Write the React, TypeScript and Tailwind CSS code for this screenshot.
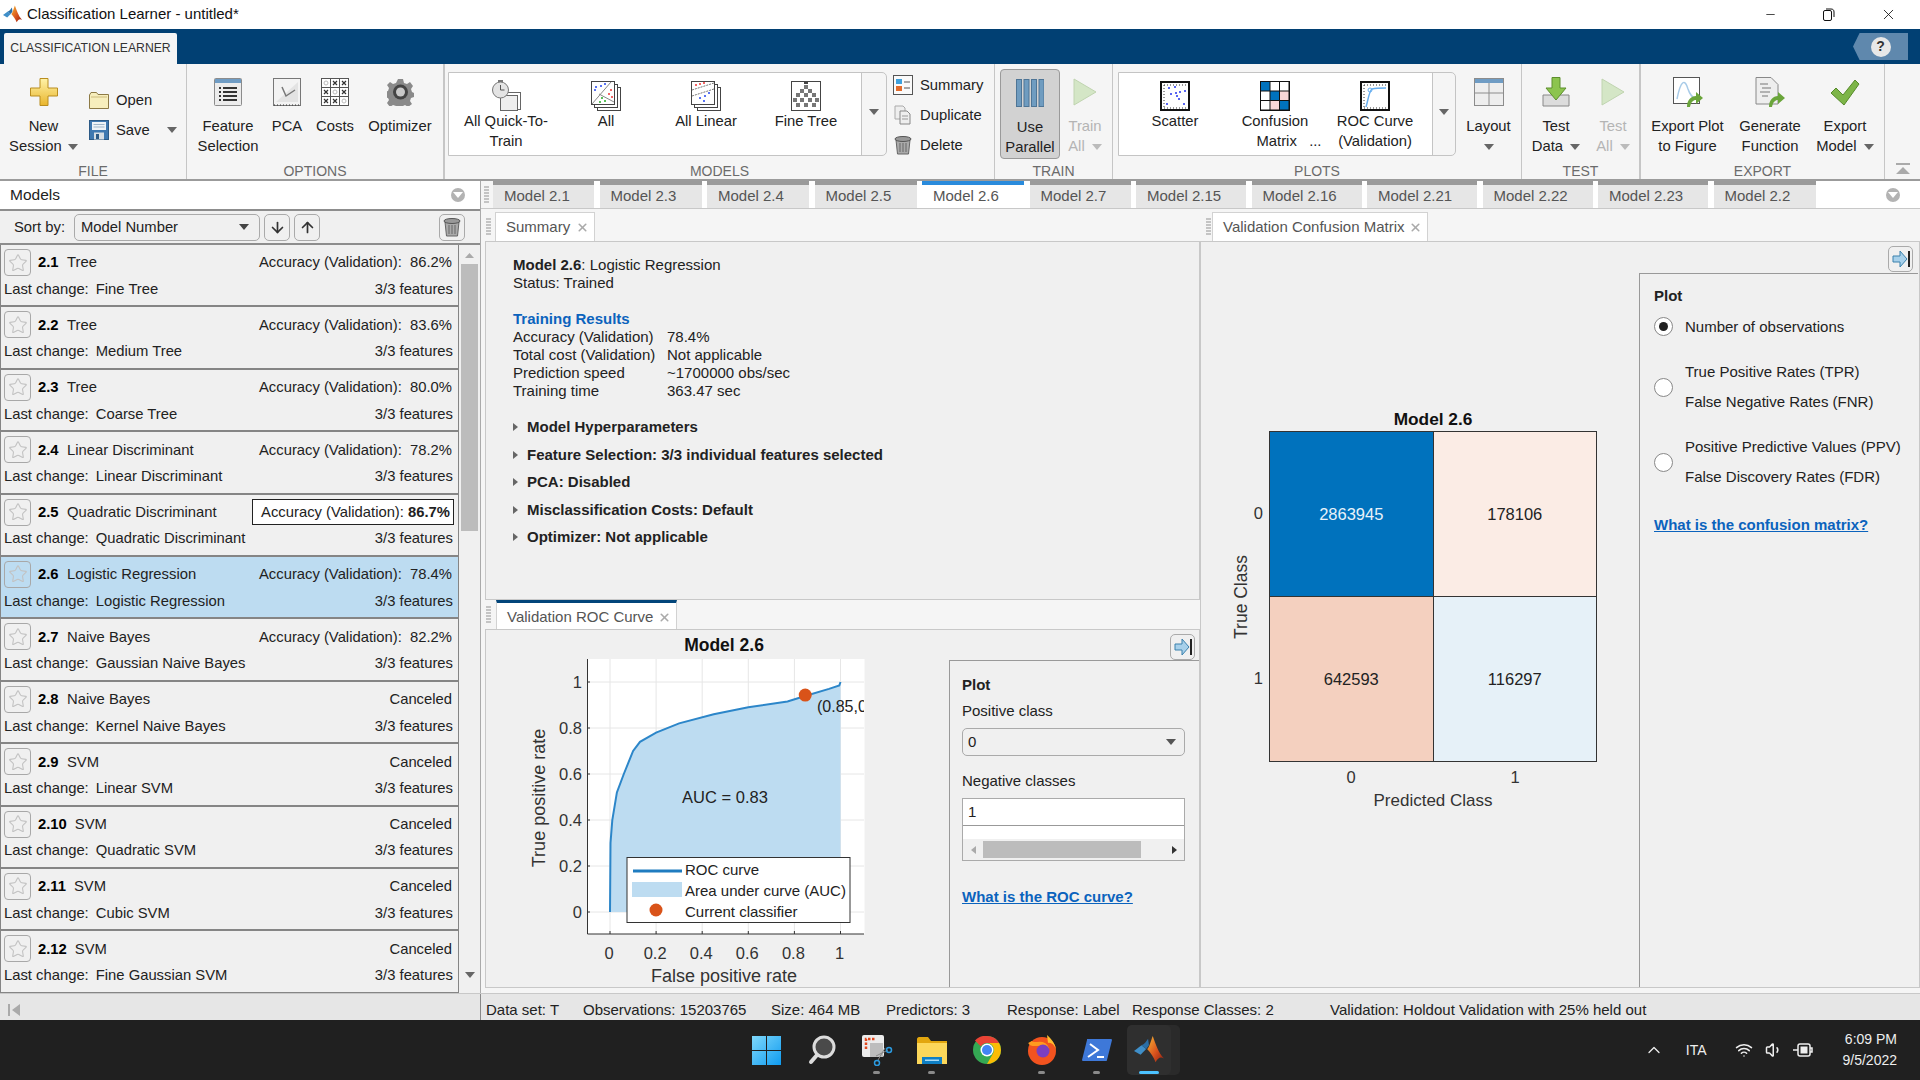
import { Star, Wifi, Volume1, ChevronUp, X, Minus, ArrowDown, ArrowUp } from "lucide-react";
import type { ReactNode } from "react";

// small filled triangle used all over the toolstrip
function Caret({ color = "#666", className = "" }: { color?: string; className?: string }) {
  return (
    <svg width="10" height="6" viewBox="0 0 10 6" className={"inline-block " + className}>
      <path d="M0 0h10L5 6z" fill={color} />
    </svg>
  );
}

function MatlabLogo({ size = 18 }: { size?: number }) {
  return (
    <svg width={size} height={size} viewBox="0 0 32 32">
      <defs>
        <linearGradient id="mlpeak" x1="0" y1="0" x2="1" y2="1">
          <stop offset="0" stopColor="#f7b733" />
          <stop offset="0.55" stopColor="#d9541e" />
          <stop offset="1" stopColor="#8f1d10" />
        </linearGradient>
      </defs>
      <path d="M0 17l8-6 5 4-6 6z" fill="#3f8fc9" />
      <path d="M8 11c3-1 5-4 7-7l1 7-3 4z" fill="#2a6ea6" />
      <path d="M20 1c3 8 6 18 12 24-4-2-6-1-9 4-2-5-5-10-9-14 2-1 4-9 6-14z" fill="url(#mlpeak)" />
    </svg>
  );
}

const PlusIcon = () => (
  <svg width="28" height="28" viewBox="0 0 28 28">
    <defs>
      <linearGradient id="plusg" x1="0" y1="0" x2="0" y2="1">
        <stop offset="0" stopColor="#fff3a8" />
        <stop offset="1" stopColor="#e9b52c" />
      </linearGradient>
    </defs>
    <path d="M10 .5h8v9.500h9.500v8H18v9.500h-8V18H.5v-8H10z" fill="url(#plusg)" stroke="#b98d1f" />
  </svg>
);
const FolderIcon = () => (
  <svg width="20" height="17" viewBox="0 0 20 17">
    <path d="M.5 3V16.500h19V2.500H9L7.500.5H2z" fill="#f7eebc" stroke="#8d7a45" />
    <path d="M2 5h16" stroke="#cdbb7c" />
  </svg>
);
const SaveIcon = () => (
  <svg width="20" height="20" viewBox="0 0 20 20">
    <rect x=".5" y=".5" width="19" height="19" fill="#3f78b0" stroke="#2c5a86" />
    <rect x="3" y="2" width="14" height="8" fill="#eef3f7" />
    <path d="M4.500 4.500h11M4.500 7h11" stroke="#9fb5c8" />
    <rect x="5" y="12.500" width="10" height="7" fill="#d7dee4" />
    <rect x="7" y="14" width="3" height="5" fill="#2c5a86" />
  </svg>
);
const FeatureIcon = () => (
  <svg width="28" height="28" viewBox="0 0 28 28">
    <rect x=".5" y=".5" width="27" height="27" rx="1" fill="#ececec" stroke="#8c8c8c" />
    <rect x="1" y="1" width="26" height="4" fill="#6f9cc4" />
    {[9, 13, 17, 21].map((y) => (
      <g key={y}>
        <rect x="5" y={y} width="2" height="2" fill="#333" />
        <rect x="9" y={y} width="14" height="2" fill="#333" />
      </g>
    ))}
  </svg>
);
const PcaIcon = () => (
  <svg width="28" height="28" viewBox="0 0 28 28">
    <rect x=".5" y=".5" width="27" height="27" fill="#f3f3f3" stroke="#777" />
    <path d="M3 24L25 4v20z" fill="#d8d8d8" opacity=".6" />
    <path d="M9 9l4 9 9-6" fill="none" stroke="#777" strokeWidth="1.500" />
    <path d="M1 27h26" stroke="#333" strokeDasharray="1 2" />
  </svg>
);
const CostsIcon = () => (
  <svg width="28" height="28" viewBox="0 0 28 28">
    <rect x=".5" y=".5" width="27" height="27" fill="#fff" stroke="#555" />
    <path d="M9.500 0v28M18.500 0v28M0 9.500h28M0 18.500h28" stroke="#555" />
    {[5, 14, 23].map((y, r) =>
      [5, 14, 23].map((x, c) =>
        r === c ? (
          <circle key={x + "-" + y} cx={x} cy={y} r="2" fill="none" stroke="#bbb" />
        ) : (
          <path key={x + "-" + y} d={`M${x - 2} ${y - 2}l4 4m0-4l-4 4`} stroke="#333" strokeWidth="1.200" />
        ),
      ),
    )}
  </svg>
);
const GearIcon = () => (
  <svg width="27" height="28" viewBox="0 0 27 28">
    <path
      d="M11 1h5l1 4 3 1 3-2 3 4-2 3 1 3 2 1v4l-3 1-1 3 2 3-4 3-3-2-2 1-1 3h-5l-1-3-3-1-3 2-3-4 2-3-1-2-3-1v-5l3-1 1-3-2-3 3-3 3 2 3-1z"
      fill="#8a8a8a"
    />
    <circle cx="13.500" cy="14" r="7.500" fill="#444" />
    <circle cx="13.500" cy="14" r="4.500" fill="#c9c9c9" />
  </svg>
);
const dots = (pts: number[][], fill: string) => pts.map((p) => <circle key={p.join()} cx={p[0]} cy={p[1]} r="1" fill={fill} />);
function StackFrame({ children }: { children: ReactNode }) {
  return (
    <svg width="30" height="30" viewBox="0 0 30 30">
      <rect x="6.500" y="6.500" width="23" height="23" fill="#fff" stroke="#444" />
      <rect x="3.500" y="3.500" width="23" height="23" fill="#fff" stroke="#444" />
      <rect x=".5" y=".5" width="23" height="23" fill="#fff" stroke="#444" />
      {children}
    </svg>
  );
}
const QuickIcon = () => (
  <svg width="30" height="32" viewBox="0 0 30 32">
    <rect x="12.500" y="12.500" width="17" height="17" fill="#fff" stroke="#666" />
    <rect x="9.500" y="15.500" width="17" height="15" fill="#eee" stroke="#666" />
    <circle cx="9.500" cy="10" r="8" fill="#e4e4e4" stroke="#777" />
    <path d="M9.500 5v5h4" fill="none" stroke="#555" />
    <rect x="7" y="0" width="5" height="2" fill="#777" />
  </svg>
);
const AllIcon = () => (
  <StackFrame>
    <path d="M1 23L20 1M8 13l15 8" stroke="#888" fill="none" />
    {dots([[5, 6], [10, 5], [14, 3], [4, 9]], "#2244ee")}
    {dots([[18, 13], [20, 9], [21, 16]], "#e33")}
    {dots([[11, 17], [14, 20], [9, 21]], "#2a2")}
  </StackFrame>
);
const LinearIcon = () => (
  <StackFrame>
    <path d="M1 9L23 2M1 15L23 8" stroke="#777" strokeDasharray="2 1" fill="none" />
    {dots([[5, 4], [9, 3], [13, 2]], "#e33")}
    {dots([[9, 17], [14, 15], [18, 12], [13, 20]], "#2244ee")}
  </StackFrame>
);
const FineTreeIcon = () => (
  <svg width="30" height="30" viewBox="0 0 30 30">
    <rect x=".5" y=".5" width="29" height="29" fill="#fff" stroke="#444" />
    <rect x="13" y="1" width="4" height="2" fill="#444" />
    {[[15, 6], [11, 10], [19, 10], [7, 14], [15, 14], [23, 14], [4, 19], [11, 19], [19, 19], [26, 19], [7, 24], [15, 24], [23, 24]].map((p) => (
      <rect key={p.join()} x={p[0] - 2} y={p[1] - 2} width="4" height="4" fill="#777" />
    ))}
  </svg>
);
const DottedFrame = ({ children }: { children: ReactNode }) => (
  <svg width="30" height="30" viewBox="0 0 30 30">
    <rect x="1" y="1" width="28" height="28" fill="#fff" stroke="#111" strokeWidth="2" />
    <path d="M4 4v23M4 27h23M4 4h23" stroke="#333" strokeDasharray="1 2" fill="none" />
    {children}
  </svg>
);
const ScatterIcon = () => (
  <DottedFrame>
    {dots([[9, 7], [15, 6], [11, 13], [16, 12], [20, 11], [17, 15], [19, 18], [7, 23], [24, 23], [25, 10]], "#2233ee")}
  </DottedFrame>
);
const ConfusionIcon = () => (
  <svg width="30" height="30" viewBox="0 0 30 30">
    <rect x="0" y="0" width="30" height="30" fill="#111" />
    {["#0072bd", "#fff", "#fff", "#fff", "#0072bd", "#f8d7d7", "#fff", "#f8d7d7", "#0072bd"].map((c, i) => (
      <rect key={i} x={1 + (i % 3) * 9.5} y={1 + Math.floor(i / 3) * 9.5} width="8.500" height="8.500" fill={c} />
    ))}
  </svg>
);
const RocIcon = () => (
  <DottedFrame>
    <path d="M6 26C8 20 9 10 12 8c4-1 8-1 14-1" fill="none" stroke="#66aef0" strokeWidth="1.500" />
    <circle cx="10" cy="9" r="2" fill="none" stroke="#66aef0" />
  </DottedFrame>
);
const ParallelIcon = () => (
  <svg width="28" height="28" viewBox="0 0 28 28">
    {[0, 7.5, 15, 22.5].map((x) => (
      <rect key={x} x={x + 0.5} y=".5" width="5" height="27" fill="#6f9cc0" stroke="#4e7596" />
    ))}
  </svg>
);
const PlayIcon = () => (
  <svg width="24" height="28" viewBox="0 0 24 28">
    <path d="M1 1l22 13L1 27z" fill="#d4e6c6" stroke="#c0d4b0" />
  </svg>
);
const LayoutIcon = () => (
  <svg width="30" height="28" viewBox="0 0 30 28">
    <rect x=".5" y=".5" width="29" height="27" fill="#eee" stroke="#8c8c8c" />
    <rect x="1" y="1" width="28" height="4" fill="#6f9cc4" />
    <path d="M15 5v22M1 15h28" stroke="#8c8c8c" />
  </svg>
);
const TestDataIcon = () => (
  <svg width="28" height="30" viewBox="0 0 28 30">
    <path d="M1 18h26v11H1z" fill="#dcdcdc" stroke="#888" />
    <path d="M10 .5h8V11h6L14 23 4 11h6z" fill="#8cc44e" stroke="#5d8f2d" />
  </svg>
);
const ExportPlotIcon = () => (
  <svg width="30" height="30" viewBox="0 0 30 30">
    <rect x=".5" y=".5" width="26" height="26" fill="#fff" stroke="#555" />
    <path d="M4 22C8 2 12 2 15 12c2 6 4 9 9 10" fill="none" stroke="#a8cbe8" strokeWidth="1.500" />
    <path d="M14 30c0-7 4-11 9-11v-4l7 6-7 6v-4c-3 0-5 2-6 7z" fill="#6aa53a" />
  </svg>
);
const GenerateIcon = () => (
  <svg width="30" height="30" viewBox="0 0 30 30">
    <path d="M1 .5h15l7 7V27H1z" fill="#eee" stroke="#888" />
    <path d="M5 7h8M7 11h9M5 15h10M7 19h6" stroke="#777" />
    <path d="M14 30c0-7 4-11 9-11v-4l7 6-7 6v-4c-3 0-5 2-6 7z" fill="#6aa53a" />
  </svg>
);
const CheckIcon = () => (
  <svg width="30" height="27" viewBox="0 0 30 27">
    <path d="M1 14l5-5 7 7L25 1l4 4-15 21z" fill="#7db548" stroke="#568a2a" />
  </svg>
);
const SummaryIcon = () => (
  <svg width="20" height="20" viewBox="0 0 20 20">
    <rect x=".5" y=".5" width="19" height="19" fill="#fafafa" stroke="#555" />
    <rect x="3" y="4" width="6" height="5" fill="#3fa1dd" />
    <rect x="3" y="11" width="6" height="5" fill="#e36c2c" />
    <path d="M11 7h6M11 13h6" stroke="#555" />
  </svg>
);
const DuplicateIcon = () => (
  <svg width="18" height="20" viewBox="0 0 18 20">
    <path d="M1 1h8l2 2v11H1z" fill="#eee" stroke="#aaa" />
    <path d="M6 6h7l3 3v10H6z" fill="#eee" stroke="#888" />
    <path d="M8 11h6M8 14h6" stroke="#999" />
  </svg>
);
const TrashIcon = ({ size = 20 }: { size?: number }) => (
  <svg width={size} height={size} viewBox="0 0 20 20">
    <path d="M3 5h14l-1.500 14h-11z" fill="#aaa" stroke="#666" />
    <ellipse cx="10" cy="4" rx="8" ry="2.500" fill="#999" stroke="#555" />
    <path d="M7 8v9M10 8v9M13 8v9" stroke="#666" />
  </svg>
);
const DockArrow = () => (
  <svg width="18" height="18" viewBox="0 0 18 18">
    <path d="M1 6h7V1l7 8-7 8v-5H1z" fill="#a7d0ea" stroke="#3a81ad" />
    <path d="M17 1v16" stroke="#222" strokeWidth="2" />
  </svg>
);

function ToolBtn(props: { w: number; icon: ReactNode; lines: ReactNode[]; dim?: boolean; active?: boolean }) {
  return (
    <div
      className={
        "flex flex-col items-center shrink-0 " +
        (props.active ? "bg-[#d2d2d2] border border-[#9a9a9a] rounded-[4px] mt-[5px] h-[90px] pt-[8px] " : "pt-[13px] ") +
        (props.dim ? "text-[#b4b4b4]" : "text-[#222]")
      }
      style={{ width: props.w }}
    >
      <div className="h-[30px] flex items-center justify-center">{props.icon}</div>
      <div className="mt-[9px] text-center leading-[20px] whitespace-nowrap">
        {props.lines.map((l, i) => (
          <div key={i}>{l}</div>
        ))}
      </div>
    </div>
  );
}

function GalleryCell({ icon, lines }: { icon: ReactNode; lines: ReactNode[] }) {
  return (
    <div className="w-[100px] flex flex-col items-center pt-[7px]">
      <div className="h-[31px] flex items-center justify-center">{icon}</div>
      <div className="text-center leading-[20px] whitespace-nowrap text-[#222]">
        {lines.map((l, i) => (
          <div key={i}>{l}</div>
        ))}
      </div>
    </div>
  );
}

function Section(props: { w: number; label: string; thick?: boolean; children: ReactNode }) {
  return (
    <div
      className={"flex flex-col shrink-0 h-full " + (props.thick ? "border-r-[2px] border-[#c6c6c6]" : "border-r border-[#c6c6c6]")}
      style={{ width: props.w }}
    >
      <div className="flex h-[99px]">{props.children}</div>
      <div className="text-center text-[#6b6b6b] leading-[16px] text-[14px]">{props.label}</div>
    </div>
  );
}

function Ribbon() {
  return (
    <div className="flex h-[115px] bg-[#f5f5f5] text-[14.8px]">
      <Section w={187} label="FILE">
        <ToolBtn w={87} icon={<PlusIcon />} lines={["New", <span>Session <Caret className="ml-[2px] mb-[1px]" /></span>]} />
        <div className="flex flex-col pt-[26px] pl-[2px] gap-[10px] text-[#222]">
          <div className="flex items-center gap-[7px] h-[20px]"><FolderIcon /> Open</div>
          <div className="flex items-center gap-[7px] h-[20px]"><SaveIcon /> Save <Caret className="ml-[10px]" /></div>
        </div>
      </Section>
      <Section w={258} label="OPTIONS" thick>
        <div className="w-[7px]" />
        <ToolBtn w={68} icon={<FeatureIcon />} lines={["Feature", "Selection"]} />
        <ToolBtn w={50} icon={<PcaIcon />} lines={["PCA"]} />
        <ToolBtn w={46} icon={<CostsIcon />} lines={["Costs"]} />
        <ToolBtn w={84} icon={<GearIcon />} lines={["Optimizer"]} />
      </Section>
      <Section w={550} label="MODELS">
        <div className="ml-[3px] mt-[8px] flex h-[84px] w-[439px] border border-[#c4c4c4] rounded-r-[5px]">
          <div className="flex w-[413px] bg-white pl-[7px] border-r border-[#c4c4c4]">
            <GalleryCell icon={<QuickIcon />} lines={["All Quick-To-", "Train"]} />
            <GalleryCell icon={<AllIcon />} lines={["All"]} />
            <GalleryCell icon={<LinearIcon />} lines={["All Linear"]} />
            <GalleryCell icon={<FineTreeIcon />} lines={["Fine Tree"]} />
          </div>
          <div className="flex-1 flex justify-center pt-[36px]"><Caret /></div>
        </div>
        <div className="flex flex-col ml-[6px] pt-[11px] gap-[10px] text-[#222]">
          <div className="flex items-center gap-[7px] h-[20px]"><SummaryIcon /> Summary</div>
          <div className="flex items-center gap-[8px] h-[20px] pl-[1px]"><DuplicateIcon /> Duplicate</div>
          <div className="flex items-center gap-[7px] h-[20px]"><TrashIcon /> Delete</div>
        </div>
      </Section>
      <Section w={118} label="TRAIN">
        <div className="w-[5px]" />
        <ToolBtn w={60} active icon={<ParallelIcon />} lines={["Use", "Parallel"]} />
        <div className="w-[5px]" />
        <ToolBtn w={40} dim icon={<PlayIcon />} lines={["Train", <span>All <Caret color="#bbb" className="ml-[3px] mb-[1px]" /></span>]} />
      </Section>
      <Section w={409} label="PLOTS">
        <div className="ml-[5px] mt-[8px] flex h-[84px] w-[338px] border border-[#c4c4c4] rounded-r-[5px]">
          <div className="flex w-[314px] bg-white pl-[6px] border-r border-[#c4c4c4]">
            <GalleryCell icon={<ScatterIcon />} lines={["Scatter"]} />
            <GalleryCell icon={<ConfusionIcon />} lines={["Confusion", <span className="pl-[28px]">Matrix &nbsp;&nbsp;...</span>]} />
            <GalleryCell icon={<RocIcon />} lines={["ROC Curve", "(Validation)"]} />
          </div>
          <div className="flex-1 flex justify-center pt-[36px]"><Caret /></div>
        </div>
        <ToolBtn w={65} icon={<LayoutIcon />} lines={["Layout", <Caret />]} />
      </Section>
      <Section w={119} label="TEST" thick>
        <ToolBtn w={68} icon={<TestDataIcon />} lines={["Test", <span>Data <Caret className="ml-[3px] mb-[1px]" /></span>]} />
        <ToolBtn w={46} dim icon={<PlayIcon />} lines={["Test", <span>All <Caret color="#bbb" className="ml-[3px] mb-[1px]" /></span>]} />
      </Section>
      <Section w={244} label="EXPORT">
        <ToolBtn w={93} icon={<ExportPlotIcon />} lines={["Export Plot", "to Figure"]} />
        <ToolBtn w={72} icon={<GenerateIcon />} lines={["Generate", "Function"]} />
        <ToolBtn w={78} icon={<CheckIcon />} lines={["Export", <span>Model <Caret className="ml-[3px] mb-[1px]" /></span>]} />
      </Section>
      <div className="flex-1 flex items-end justify-center pb-[3px]">
        <svg width="14" height="14" viewBox="0 0 14 14">
          <path d="M0 1h14v2H0zM7 5l7 7H0z" fill="#aaa" />
        </svg>
      </div>
    </div>
  );
}

type Model = { n: string; name: string; status: string; change: string; best?: boolean; sel?: boolean };
const models: Model[] = [
  { n: "2.1", name: "Tree", status: "86.2%", change: "Fine Tree" },
  { n: "2.2", name: "Tree", status: "83.6%", change: "Medium Tree" },
  { n: "2.3", name: "Tree", status: "80.0%", change: "Coarse Tree" },
  { n: "2.4", name: "Linear Discriminant", status: "78.2%", change: "Linear Discriminant" },
  { n: "2.5", name: "Quadratic Discriminant", status: "86.7%", change: "Quadratic Discriminant", best: true },
  { n: "2.6", name: "Logistic Regression", status: "78.4%", change: "Logistic Regression", sel: true },
  { n: "2.7", name: "Naive Bayes", status: "82.2%", change: "Gaussian Naive Bayes" },
  { n: "2.8", name: "Naive Bayes", status: "", change: "Kernel Naive Bayes" },
  { n: "2.9", name: "SVM", status: "", change: "Linear SVM" },
  { n: "2.10", name: "SVM", status: "", change: "Quadratic SVM" },
  { n: "2.11", name: "SVM", status: "", change: "Cubic SVM" },
  { n: "2.12", name: "SVM", status: "", change: "Fine Gaussian SVM" },
];

function ModelRow({ m }: { m: Model }) {
  return (
    <div className={"h-[62.4px] shrink-0 border-b-[2px] border-[#858585] pl-[3px] pr-[5px] flex flex-col " + (m.sel ? "bg-[#bddcf1]" : "bg-[#f0f0f0]")}>
      <div className="flex items-center h-[35px]">
        <div className="w-[27px] h-[27px] border border-[#a8a8a8] rounded-[4px] flex items-center justify-center">
          <Star size={20} strokeWidth={1.3} color="#c2c2c2" />
        </div>
        <span className="ml-[7px] font-bold text-black min-w-[29px] pr-[8px]">{m.n}</span>
        <span>{m.name}</span>
        {m.status === "" ? (
          <span className="ml-auto pr-[1px]">Canceled</span>
        ) : m.best ? (
          <span className="ml-auto -mr-[1px] bg-white border border-[#222] h-[26px] w-[202px] flex items-center justify-end pr-[3px]">
            Accuracy (Validation):&nbsp; <b>{m.status}</b>
          </span>
        ) : (
          <span className="ml-auto pr-[1px]">Accuracy (Validation):&nbsp; {m.status}</span>
        )}
      </div>
      <div className="flex items-center h-[20px] -mt-[1px]">
        <span>Last change:</span>
        <span className="ml-[7px]">{m.change}</span>
        <span className="ml-auto">3/3 features</span>
      </div>
    </div>
  );
}

function ModelsPanel() {
  return (
    <div className="w-[481px] shrink-0 flex flex-col border-r border-[#aaa] text-[14.8px] text-[#222]">
      <div className="h-[28px] bg-white flex items-center pl-[10px] pr-[15px] justify-between text-[15.5px]">
        <span>Models</span>
        <span className="w-[14px] h-[14px] rounded-full bg-[#b3b3b3] flex items-center justify-center"><Caret color="#fff" /></span>
      </div>
      <div className="h-[36px] bg-[#f0f0f0] border-y-[2px] border-[#8d8d8d] flex items-center pl-[14px]">
        <span className="w-[60px]">Sort by:</span>
        <div className="w-[186px] h-[27px] border border-[#aaa] rounded-[5px] flex items-center justify-between px-[6px]">
          Model Number <Caret color="#444" className="mr-[4px]" />
        </div>
        <div className="ml-[4px] w-[26px] h-[27px] border border-[#aaa] rounded-[5px] flex items-center justify-center"><ArrowDown size={17} strokeWidth={2.4} color="#333" /></div>
        <div className="ml-[4px] w-[26px] h-[27px] border border-[#aaa] rounded-[5px] flex items-center justify-center"><ArrowUp size={17} strokeWidth={2.4} color="#333" /></div>
        <div className="ml-[119px] w-[26px] h-[27px] border border-[#aaa] rounded-[5px] flex items-center justify-center"><TrashIcon /></div>
      </div>
      <div className="flex flex-1 min-h-0 overflow-hidden">
        <div className="w-[459px] flex flex-col border-x border-[#858585]">
          {models.map((m) => (
            <ModelRow key={m.n} m={m} />
          ))}
        </div>
        <div className="flex-1 bg-[#f0f0f0] flex flex-col items-center pt-[8px]">
          <svg width="9" height="5" viewBox="0 0 9 5"><path d="M0 5h9L4.500 0z" fill="#aaa" /></svg>
          <div className="w-[17px] h-[267px] bg-[#bcbcbc] mt-[6px]" />
          <div className="mt-auto mb-[8px]"><Caret color="#666" /></div>
        </div>
      </div>
    </div>
  );
}

const tabs = [
  { t: "Model 2.1", w: 101 }, { t: "Model 2.3", w: 102 }, { t: "Model 2.4", w: 102 }, { t: "Model 2.5", w: 102 },
  { t: "Model 2.6", w: 102, on: true }, { t: "Model 2.7", w: 101 }, { t: "Model 2.15", w: 110 }, { t: "Model 2.16", w: 110 },
  { t: "Model 2.21", w: 110 }, { t: "Model 2.22", w: 110 }, { t: "Model 2.23", w: 110 }, { t: "Model 2.2", w: 102 },
];

function Grip() {
  return <div className="w-[5px] h-[18px] bg-[repeating-linear-gradient(to_bottom,#c4c4c4_0,#c4c4c4_2px,transparent_2px,transparent_3px)]" />;
}

function DocTab({ title, w, stripe }: { title: string; w: number; stripe?: boolean }) {
  return (
    <div
      className={"flex items-center justify-between h-[29px] bg-white border-x border-[#d2d2d2] pl-[10px] pr-[5px] text-[#555] text-[15px] " + (stripe ? "pt-[2px] border-t-[3px] border-t-[#02457a]" : "border-t border-t-[#d2d2d2]")}
      style={{ width: w }}
    >
      <span className="whitespace-nowrap">{title}</span>
      <X size={13} strokeWidth={3} color="#aaa" />
    </div>
  );
}

function SummaryPanel() {
  const rows = [
    ["Accuracy (Validation)", "78.4%"],
    ["Total cost (Validation)", "Not applicable"],
    ["Prediction speed", "~1700000 obs/sec"],
    ["Training time", "363.47 sec"],
  ];
  const sections = ["Model Hyperparameters", "Feature Selection: 3/3 individual features selected", "PCA: Disabled", "Misclassification Costs: Default", "Optimizer: Not applicable"];
  return (
    <div className="flex flex-col h-[391px] shrink-0">
      <div className="flex items-end h-[32px] pl-[5px] gap-[1px] shrink-0">
        <div className="h-[29px] flex items-center pr-[1px]"><Grip /></div>
        <div className="ml-[2px]"><DocTab title="Summary" w={100} /></div>
      </div>
      <div className="flex-1 ml-[4px] bg-[#f0f0f0] border border-[#c8c8c8] pl-[27px] pt-[14px] text-[#222] leading-[18px]">
        <div><b>Model 2.6</b>: Logistic Regression</div>
        <div>Status: Trained</div>
        <div className="mt-[18px] font-bold text-[#0b63bd]">Training Results</div>
        {rows.map((r) => (
          <div key={r[0]} className="flex">
            <span className="w-[154px]">{r[0]}</span>
            <span>{r[1]}</span>
          </div>
        ))}
        <div className="mt-[18px] flex flex-col gap-[9.5px]">
          {sections.map((s) => (
            <div key={s} className="flex items-center font-bold">
              <svg width="5" height="8" viewBox="0 0 5 8" className="mr-[9px]"><path d="M0 0l5 4-5 4z" fill="#666" /></svg>
              {s}
            </div>
          ))}
        </div>
      </div>
    </div>
  );
}

function RocChart() {
  const px = (t: number) => 124 + t * 230.5;
  const py = (t: number) => 282 - t * 230;
  const pts = [[0, 0], [0.002, 0.3], [0.01, 0.4], [0.03, 0.52], [0.06, 0.6], [0.1, 0.7], [0.13, 0.74], [0.2, 0.78], [0.3, 0.82], [0.45, 0.86], [0.6, 0.89], [0.77, 0.915], [0.85, 0.94], [0.95, 0.97], [0.995, 0.985], [1, 1]];
  const line = pts.map((p) => px(p[0]).toFixed(1) + "," + py(p[1]).toFixed(1)).join(" ");
  const ticks = [0, 0.2, 0.4, 0.6, 0.8, 1];
  return (
    <svg width="463" height="356" viewBox="0 0 463 356" className="shrink-0" fontFamily="'Liberation Sans', sans-serif">
      <defs>
        <clipPath id="axclip"><rect x="101" y="29" width="277" height="275" /></clipPath>
      </defs>
      <text x="238" y="21" textAnchor="middle" fontWeight="bold" fontSize="17.5" fill="#111">Model 2.6</text>
      <rect x="101.5" y="29" width="277" height="275" fill="#fff" />
      {ticks.map((t) => (
        <g key={t}>
          <path d={`M${px(t)} 29V304`} stroke="#e6e6e6" />
          <path d={`M101 ${py(t)}H378`} stroke="#e6e6e6" />
          <path d={`M${px(t)} 304v-3M101 ${py(t)}h3`} stroke="#333" />
          <text x={px(t) - 1} y="329" textAnchor="middle" fontSize="16.5" fill="#333">{t}</text>
          <text x="96" y={py(t) + 6} textAnchor="end" fontSize="16.5" fill="#333">{t}</text>
        </g>
      ))}
      <polygon points={line + ` ${px(1)},${py(0)}`} fill="#bddcf1" />
      <polyline points={line} fill="none" stroke="#2c86c9" strokeWidth="2" />
      <path d="M101.5 29V304H378" fill="none" stroke="#333" />
      <circle cx={px(0.847)} cy={py(0.943)} r="6.5" fill="#d95319" />
      <text x="331" y="82" fontSize="16" fill="#222" clipPath="url(#axclip)">(0.85,0.94)</text>
      <text x="239" y="173" textAnchor="middle" fontSize="16.5" fill="#222">AUC = 0.83</text>
      <rect x="141" y="227.5" width="223" height="65" fill="#fff" stroke="#333" />
      <path d="M147 241H196" stroke="#1f7cc0" strokeWidth="3" />
      <rect x="146" y="252" width="50" height="15" fill="#bddcf1" />
      <circle cx="170" cy="280" r="6.5" fill="#d95319" />
      <text x="199" y="245" fontSize="15" fill="#222">ROC curve</text>
      <text x="199" y="266" fontSize="15" fill="#222">Area under curve (AUC)</text>
      <text x="199" y="287" fontSize="15" fill="#222">Current classifier</text>
      <text x="238" y="352" textAnchor="middle" fontSize="18" fill="#333">False positive rate</text>
      <text transform="translate(59 168) rotate(-90)" textAnchor="middle" fontSize="18" fill="#333">True positive rate</text>
    </svg>
  );
}

function RocPanel() {
  return (
    <div className="flex flex-col flex-1 min-h-0">
      <div className="flex items-end h-[29px] pl-[5px] shrink-0">
        <div className="h-[29px] flex items-center mr-[5px]"><Grip /></div>
        <DocTab title="Validation ROC Curve" w={181} stripe />
      </div>
      <div className="relative flex flex-1 min-h-0 ml-[4px] bg-[#f0f0f0] border border-[#c8c8c8]">
        <RocChart />
        <div className="absolute right-[4px] top-[4px] w-[25px] h-[26px] border border-[#aaa] rounded-[5px] flex items-center justify-center bg-[#f0f0f0]"><DockArrow /></div>
        <div className="mt-[30px] flex-1 bg-[#f0f0f0] border-l border-t border-[#999] pl-[12px] pr-[14px] text-[#222]">
          <div className="font-bold mt-[15px] leading-[18px]">Plot</div>
          <div className="mt-[8px] leading-[18px]">Positive class</div>
          <div className="mt-[8px] h-[28px] border border-[#aaa] rounded-[5px] flex items-center justify-between pl-[5px] pr-[8px]">0 <Caret color="#555" /></div>
          <div className="mt-[16px] leading-[18px]">Negative classes</div>
          <div className="mt-[8px] h-[63px] border border-[#aaa] bg-white flex flex-col">
            <div className="h-[27px] border-b border-[#999] pl-[5px] flex items-center">1</div>
            <div className="mt-auto h-[21px] bg-[#f0f0f0] flex items-center pl-[8px] pr-[7px]">
              <svg width="5" height="8" viewBox="0 0 5 8"><path d="M5 0L0 4l5 4z" fill="#aaa" /></svg>
              <div className="ml-[7px] w-[158px] h-[17px] bg-[#bcbcbc]" />
              <svg width="5" height="8" viewBox="0 0 5 8" className="ml-auto"><path d="M0 0l5 4-5 4z" fill="#333" /></svg>
            </div>
          </div>
          <div className="mt-[27px] font-bold text-[#0b63bd] underline leading-[18px]">What is the ROC curve?</div>
        </div>
      </div>
    </div>
  );
}

function ConfusionMatrix() {
  const cells = [
    { v: "2863945", bg: "bg-[#0072bd]", fg: "text-[#e8f2fa]" },
    { v: "178106", bg: "bg-[#fbece5]", fg: "text-[#222]" },
    { v: "642593", bg: "bg-[#f4d0bf]", fg: "text-[#222]" },
    { v: "116297", bg: "bg-[#e6f1f8]", fg: "text-[#222]" },
  ];
  return (
    <div className="flex-1 flex flex-col pt-[167px] pl-[30px] text-[#333] text-[16.5px]">
      <div className="pl-[38px] w-[366px] text-center font-bold text-[17.3px] text-[#111] leading-[20px] mb-[2px]">Model 2.6</div>
      <div className="flex">
        <div className="w-[20px] h-[331px] flex items-center justify-center">
          <span className="[writing-mode:vertical-rl] rotate-180 text-[17.5px]">True Class</span>
        </div>
        <div className="w-[18px] h-[331px] flex flex-col justify-around items-end pr-[6px] pb-[1px]">
          <span>0</span>
          <span>1</span>
        </div>
        <div className="w-[328px] h-[331px] grid grid-cols-2 grid-rows-2 border border-[#333] gap-px bg-[#333]">
          {cells.map((c) => (
            <div key={c.v} className={"flex items-center justify-center " + c.bg + " " + c.fg}>{c.v}</div>
          ))}
        </div>
      </div>
      <div className="ml-[38px] w-[328px] grid grid-cols-2 text-center mt-[6px] leading-[18px]">
        <span>0</span>
        <span>1</span>
      </div>
      <div className="ml-[38px] w-[328px] text-center mt-[2px] text-[17px]">Predicted Class</div>
    </div>
  );
}

function Radio({ on, lines }: { on?: boolean; lines: string[] }) {
  return (
    <div className="flex items-center gap-[12px]">
      <div className="w-[19px] h-[19px] shrink-0 rounded-full border border-[#888] bg-white flex items-center justify-center">
        {on && <div className="w-[9px] h-[9px] rounded-full bg-[#222]" />}
      </div>
      <div className="flex flex-col gap-[12px] leading-[18px] whitespace-nowrap">
        {lines.map((l) => (
          <span key={l}>{l}</span>
        ))}
      </div>
    </div>
  );
}

function ConfusionPanel() {
  return (
    <div className="flex-1 flex flex-col min-w-0">
      <div className="flex items-end h-[32px] pl-[6px] shrink-0">
        <div className="h-[29px] flex items-center mr-[1px]"><Grip /></div>
        <DocTab title="Validation Confusion Matrix" w={216} />
      </div>
      <div className="relative flex flex-1 min-h-0 bg-[#f0f0f0] border border-[#c8c8c8]">
        <ConfusionMatrix />
        <div className="absolute right-[6px] top-[4px] w-[25px] h-[26px] border border-[#aaa] rounded-[5px] flex items-center justify-center"><DockArrow /></div>
        <div className="mt-[31px] mr-[1px] w-[279px] border-l border-t border-[#999] pl-[14px] text-[#222]">
          <div className="font-bold mt-[13px] leading-[18px]">Plot</div>
          <div className="mt-[12px] flex flex-col gap-[27px]">
            <Radio on lines={["Number of observations"]} />
            <Radio lines={["True Positive Rates (TPR)", "False Negative Rates (FNR)"]} />
            <Radio lines={["Positive Predictive Values (PPV)", "False Discovery Rates (FDR)"]} />
          </div>
          <div className="mt-[28px] font-bold text-[#0b63bd] underline">What is the confusion matrix?</div>
        </div>
      </div>
    </div>
  );
}

function Taskbar() {
  const Cell = ({ children, dot }: { children: ReactNode; dot?: boolean }) => (
    <div className="relative w-[55px] h-full flex items-center justify-center">
      {children}
      {dot && <span className="absolute bottom-[6px] w-[7px] h-[3px] rounded-full bg-[#8a8a8a]" />}
    </div>
  );
  return (
    <div className="h-[60px] bg-[#202020] flex items-center pl-[739px] shrink-0">
      <Cell>
        <svg width="30" height="30" viewBox="0 0 30 30">
          <defs>
            <linearGradient id="wing" x1="0" y1="0" x2="1" y2="1"><stop offset="0" stopColor="#7fd8fb" /><stop offset="1" stopColor="#0f9bf0" /></linearGradient>
          </defs>
          <path d="M0 1h14v14H0zM15 1h14v14H15zM0 16h14v14H0zM15 16h14v14H15z" fill="url(#wing)" />
        </svg>
      </Cell>
      <Cell>
        <svg width="28" height="30" viewBox="0 0 28 30">
          <circle cx="16" cy="12" r="10" fill="#4a4a4a" stroke="#dcdcdc" strokeWidth="3" />
          <path d="M9 20l-6 7" stroke="#dcdcdc" strokeWidth="4" strokeLinecap="round" />
        </svg>
      </Cell>
      <Cell dot>
        <svg width="32" height="32" viewBox="0 0 32 32">
          <rect x="1" y="1" width="22" height="22" rx="2" fill="#ececec" />
          <path d="M5 15V5h10" fill="none" stroke="#e2471d" strokeWidth="2.500" strokeDasharray="2.500 1.500" />
          <rect x="9" y="9" width="13" height="14" fill="#bdbdbd" />
          <path d="M15 22l12-6M24 14L17 26" stroke="#888" />
          <circle cx="16" cy="29" r="2.500" fill="none" stroke="#2c9be0" strokeWidth="1.500" />
          <circle cx="28" cy="16" r="2.500" fill="none" stroke="#2c9be0" strokeWidth="1.500" />
        </svg>
      </Cell>
      <Cell dot>
        <svg width="30" height="28" viewBox="0 0 30 28">
          <path d="M0 3c0-1 1-2 2-2h9l3 4h16v22H0z" fill="#e2a60e" />
          <rect x="0" y="7" width="30" height="21" fill="#fcd75a" />
          <rect x="5" y="21" width="20" height="7" fill="#0f7fc4" />
          <rect x="8" y="23.500" width="14" height="1.500" fill="#a9dbf7" />
        </svg>
      </Cell>
      <Cell>
        <svg width="28" height="28" viewBox="0 0 28 28">
          <circle cx="14" cy="14" r="14" fill="#34a853" />
          <path d="M14 0a14 14 0 0 1 12.100 7H14a7 7 0 0 0-6.100 3.500L2 4.500A14 14 0 0 1 14 0z" fill="#ea4335" />
          <path d="M26.100 7A14 14 0 0 1 14 28l6-10.500A7 7 0 0 0 14 7z" fill="#fbbc05" />
          <circle cx="14" cy="14" r="6.500" fill="#fff" />
          <circle cx="14" cy="14" r="5" fill="#4285f4" />
        </svg>
      </Cell>
      <Cell dot>
        <svg width="28" height="30" viewBox="0 0 28 30">
          <circle cx="14" cy="16" r="14" fill="#f2531f" />
          <path d="M19 0c6 5 9 11 9 16 0-4-4-9-8-8z" fill="#ffbd2e" />
          <path d="M2 7c2 4 8 1 12 2 3 1 5 3 5 6" fill="none" stroke="#ff9a1f" strokeWidth="4" />
          <circle cx="15" cy="16" r="6.500" fill="#7a3fc0" />
        </svg>
      </Cell>
      <Cell dot>
        <svg width="30" height="24" viewBox="0 0 30 24">
          <path d="M5 1h24c1 0 1 1 1 1l-5 20c0 1-1 1-1 1H1c-1 0-1-1-1-1L5 2z" fill="#3e78d8" />
          <path d="M8 6l8 6-10 7M15 19h7" fill="none" stroke="#fff" strokeWidth="2" />
        </svg>
      </Cell>
      <div className="relative w-[55px] h-full flex items-center justify-center">
        <div className="absolute left-[6px] top-[5px] w-[50px] h-[50px] rounded-[5px] bg-[#2a2a2a]" />
        <div className="absolute left-[3px] top-[5px] w-[44px] h-[50px] rounded-[5px] bg-[#2f2f2f]" />
        <span className="absolute left-[15px] bottom-[6px] w-[20px] h-[3px] rounded-full bg-[#4cc2ff]" />
        <div className="relative -ml-[5px]"><MatlabLogo size={30} /></div>
      </div>
      <div className="ml-auto flex items-center text-[#eee] text-[14px] pr-[23px]">
        <ChevronUp size={20} strokeWidth={1.5} />
        <span className="ml-[22px]">ITA</span>
        <Wifi size={18} className="ml-[28px]" />
        <Volume1 size={18} className="ml-[12px]" />
        <svg width="20" height="16" viewBox="0 0 20 16" className="ml-[10px]">
          <rect x="5" y="2" width="12" height="12" rx="2" fill="none" stroke="#eee" strokeWidth="1.500" />
          <rect x="7.500" y="4.500" width="7" height="7" fill="#eee" />
          <path d="M0 8h5M17 6h2v4h-2" stroke="#eee" strokeWidth="1.500" fill="none" />
        </svg>
        <div className="ml-[30px] text-right leading-[21px]">
          <div>6:09 PM</div>
          <div>9/5/2022</div>
        </div>
      </div>
    </div>
  );
}

export default function App() {
  return (
    <div className="w-[1920px] h-[1080px] overflow-hidden flex flex-col bg-[#f5f5f5] text-[14px] [font-family:'Liberation_Sans',Arial,sans-serif]">
      {/* title bar */}
      <div className="h-[29px] bg-white flex items-center pl-[3px] shrink-0 text-[15px] text-[#111]">
        <MatlabLogo size={19} />
        <span className="ml-[5px]">Classification Learner - untitled*</span>
        <div className="ml-auto flex items-center text-[#111]">
          <Minus size={13} strokeWidth={1.4} />
          <svg width="12" height="13" viewBox="0 0 12 13" className="ml-[46px]">
            <rect x=".5" y="2.500" width="8" height="10" rx="1.500" fill="none" stroke="#111" />
            <path d="M3 1h5c2 0 3 1 3 3v5" fill="none" stroke="#111" />
          </svg>
          <X size={17} strokeWidth={1.2} className="ml-[45px] mr-[23px]" />
        </div>
      </div>

      {/* blue tab strip */}
      <div className="h-[35px] bg-[#014073] flex items-end pl-[4px] shrink-0 relative">
        <div className="w-[173px] h-[31px] bg-[#f5f5f5] rounded-t-[2px] flex items-center justify-center text-[12.2px] whitespace-nowrap text-[#333]">CLASSIFICATION LEARNER</div>
        <div className="absolute right-[12px] top-[4px] w-[55px] h-[27px] bg-[#5f88ad] [clip-path:polygon(12%_0,100%_0,100%_100%,12%_100%,0_50%)] flex items-center justify-center">
          <span className="w-[20px] h-[20px] rounded-full bg-[#e8e8e8] text-[#333] font-bold text-[14px] flex items-center justify-center">?</span>
        </div>
      </div>

      <Ribbon />

      <div className="flex flex-1 min-h-0 border-t-[2px] border-[#9b9b9b]">
        <ModelsPanel />
        <div className="flex-1 flex flex-col min-w-0 text-[15px]">
          <div className="h-[28px] bg-white flex shrink-0 border-b border-[#c8c8c8] relative">
            <div className="w-[12px] flex items-center pl-[3px] bg-[#f5f5f5]"><Grip /></div>
            {tabs.map((t) => (
              <div
                key={t.t}
                className={"shrink-0 h-full flex items-center pl-[11px] mr-[5.5px] border-t-[4px] text-[#555] " + (t.on ? "bg-white border-[#2a8bdc] text-[#222]" : "bg-[#e6e6e6] border-[#9a9a9a]")}
                style={{ width: t.w }}
              >
                {t.t}
              </div>
            ))}
            <span className="absolute right-[20px] top-[7px] w-[14px] h-[14px] rounded-full bg-[#b3b3b3] flex items-center justify-center"><Caret color="#fff" /></span>
          </div>
          <div className="flex flex-1 min-h-0 pb-[5px]">
            <div className="w-[719px] shrink-0 flex flex-col">
              <SummaryPanel />
              <RocPanel />
            </div>
            <ConfusionPanel />
          </div>
        </div>
      </div>

      {/* status bar */}
      <div className="h-[27px] shrink-0 bg-[#e6e6e6] flex border-t border-[#c8c8c8] text-[15px] text-[#222]">
        <div className="w-[481px] shrink-0 flex items-center pt-[6px] pl-[8px] border-r border-[#888]">
          <svg width="12" height="12" viewBox="0 0 12 12"><path d="M0 0h2v12H0zM12 0v12L4 6z" fill="#aaa" /></svg>
        </div>
        <div className="flex-1 flex items-center pt-[6px]">
          <span className="ml-[5px] w-[97px]">Data set: T</span>
          <span className="w-[188px]">Observations: 15203765</span>
          <span className="w-[115px]">Size: 464 MB</span>
          <span className="w-[121px]">Predictors: 3</span>
          <span className="w-[125px]">Response: Label</span>
          <span className="w-[198px]">Response Classes: 2</span>
          <span>Validation: Holdout Validation with 25% held out</span>
        </div>
      </div>

      <Taskbar />
    </div>
  );
}
